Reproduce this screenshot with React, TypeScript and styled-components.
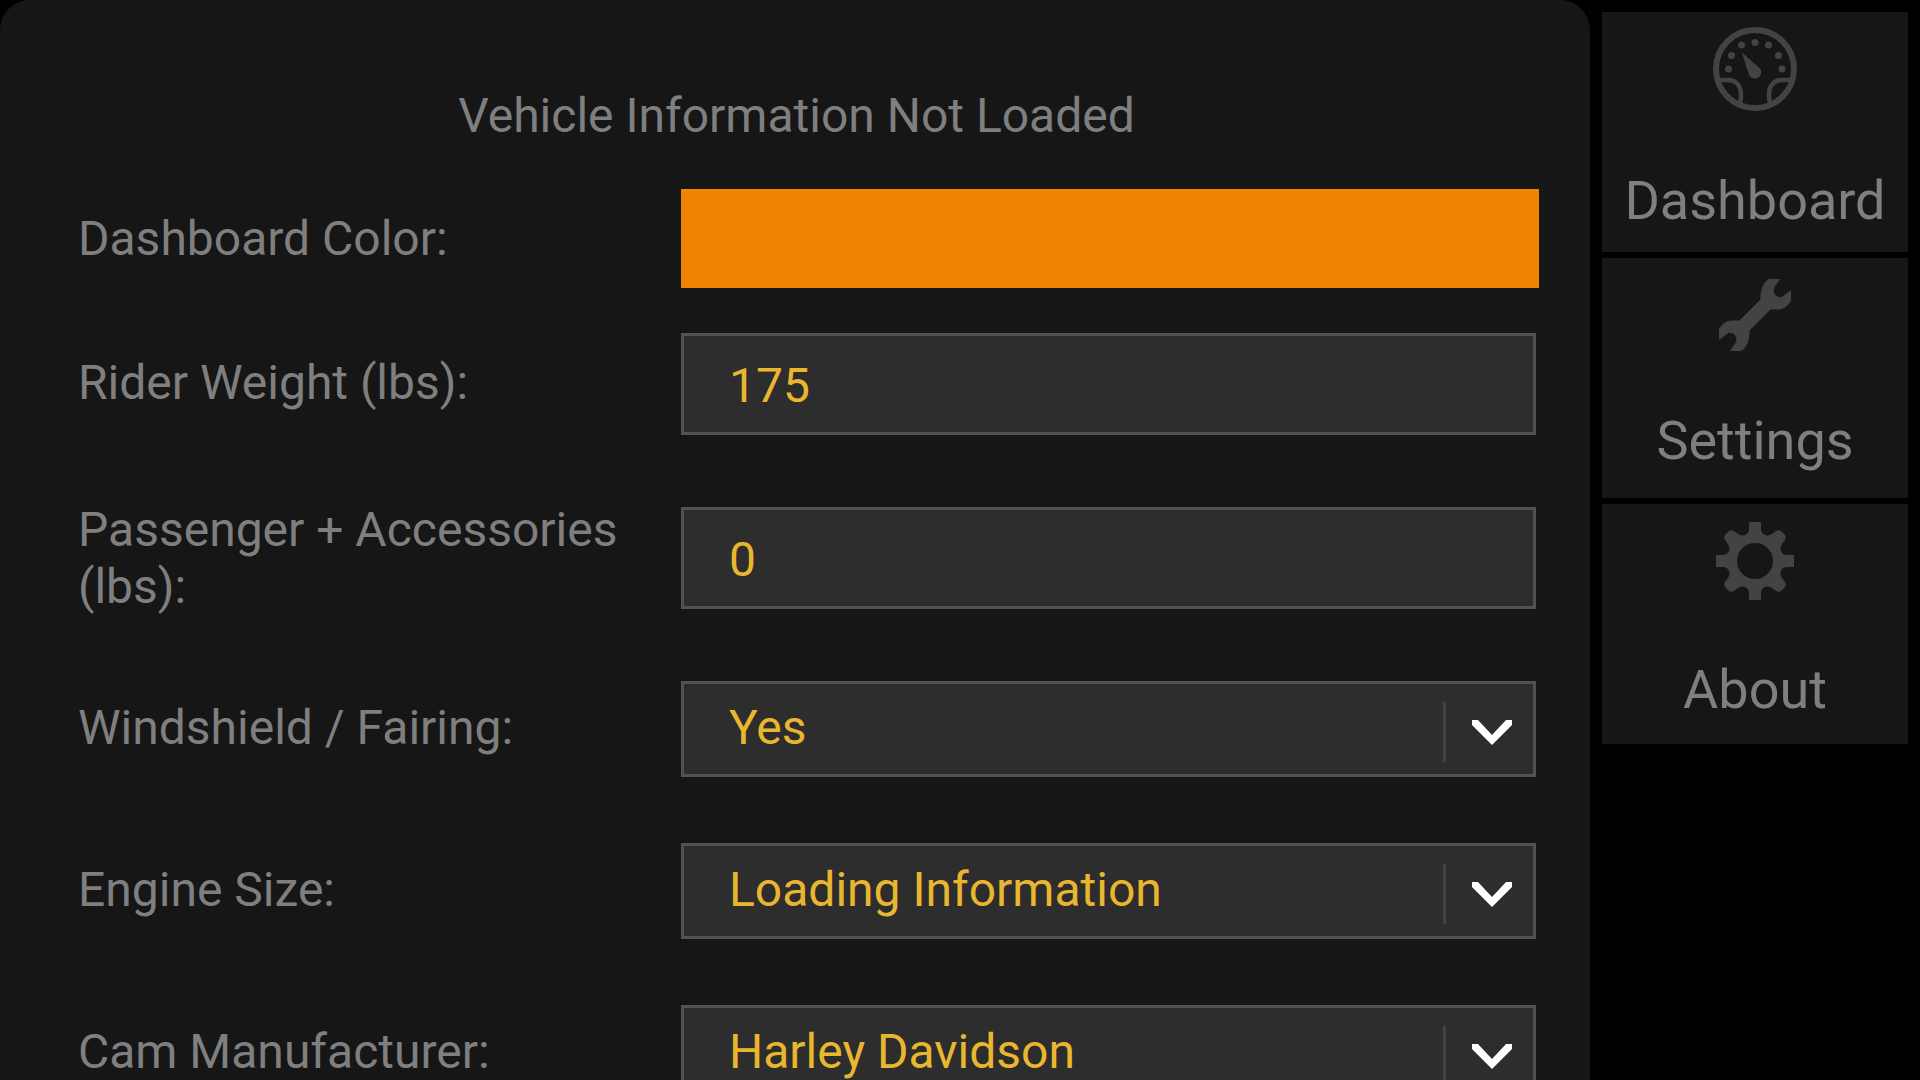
import React, { useState } from "react";
import styled, { createGlobalStyle } from "styled-components";

const color = {
  page: "#000000",
  surface: "#161616",
  field: "#2d2d2d",
  border: "#525252",
  divider: "#434343",
  icon: "#434343",
  text: "#7f7f7f",
  value: "#e9b630",
};

const GlobalStyle = createGlobalStyle`
  *, *::before, *::after { box-sizing: border-box; }
  body {
    margin: 0;
    background: ${color.page};
    color: ${color.text};
    font-family: Roboto, "Liberation Sans", sans-serif;
    font-size: 48px;
    line-height: 57px;
  }
`;

const Shell = styled.div`
  display: flex;
  height: 100vh;
  overflow: hidden;
`;

const Panel = styled.main`
  flex: 1;
  min-width: 0;
  padding: 87px 51px 48px 78px;
  overflow-y: auto;
  scrollbar-width: none;
  background: ${color.surface};
  border-radius: 30px 30px 0 0;
`;

const Title = styled.h1`
  margin: 0 0 45px;
  padding-right: 24px;
  font-size: inherit;
  font-weight: 400;
  text-align: center;
`;

const Row = styled.div<{ $gap?: number }>`
  display: grid;
  grid-template-columns: 603px minmax(0, 1fr);
  align-items: center;
  margin-bottom: ${({ $gap = 66 }) => $gap}px;
`;

const Label = styled.label<{ $raised?: boolean }>`
  padding-right: 48px;
  padding-bottom: ${({ $raised }) => ($raised ? 4 : 0)}px;
`;

const Swatch = styled.button`
  height: 99px;
  padding: 0;
  border: 0;
  background: #ee8400;
  cursor: pointer;
`;

const TextField = styled.input`
  width: calc(100% - 3px);
  height: 102px;
  padding: 3px 45px 0;
  border: 3px solid ${color.border};
  border-radius: 0;
  outline: 0;
  background: ${color.field};
  color: ${color.value};
  font: inherit;
`;

const SelectBox = styled.div`
  display: grid;
  grid-template-columns: minmax(0, 1fr) 93px;
  margin-right: 3px;
`;

const SelectControl = styled.select`
  grid-area: 1 / 1 / 2 / 3;
  height: 96px;
  padding: 0 93px 4px 45px;
  border: 3px solid ${color.border};
  border-radius: 0;
  outline: 0;
  appearance: none;
  background: ${color.field};
  color: ${color.value};
  font: inherit;
`;

const Arrow = styled.span`
  grid-area: 1 / 2 / 2 / 3;
  display: flex;
  align-items: center;
  height: 60px;
  margin-top: 21px;
  padding-left: 26px;
  border-left: 3px solid ${color.divider};
  pointer-events: none;
`;

const Nav = styled.nav`
  display: flex;
  flex: 0 0 330px;
  flex-direction: column;
  gap: 6px;
  padding: 12px;
`;

const NavButton = styled.button<{ $iconSize: number }>`
  display: flex;
  flex-direction: column;
  align-items: center;
  gap: 57px;
  height: 240px;
  padding: ${({ $iconSize }) => 57 - $iconSize / 2}px 0 0;
  border: 0;
  background: ${color.surface};
  color: inherit;
  font: inherit;
  font-size: 54px;
  line-height: 66px;
  cursor: pointer;

  svg {
    flex: none;
    display: block;
  }
`;

function ChevronIcon() {
  return (
    <svg width="40" height="25" viewBox="0 0 40 25" aria-hidden="true">
      <path d="M0 0H6L20 15L34 0H40V5L20 25L0 5Z" fill="#ffffff" />
    </svg>
  );
}

function GaugeIcon() {
  const dots = [
    [15.5, 42],
    [18.5, 28.5],
    [28.5, 18],
    [42, 15.5],
    [55.5, 18],
    [65.5, 28.5],
    [69, 42],
  ];
  return (
    <svg width="84" height="84" viewBox="0 0 84 84" aria-hidden="true">
      <circle cx="42" cy="42" r="39" fill="none" stroke={color.icon} strokeWidth="6" />
      <g fill="none" stroke={color.icon} strokeWidth="4.5">
        <path d="M5 53H15C24 53 28 60 28 67C28 70 28 73 27 76" />
        <path d="M79 53H69C60 53 56 60 56 67C56 70 56 73 57 76" />
      </g>
      <g fill={color.icon}>
        {dots.map(([cx, cy]) => (
          <circle key={cx} cx={cx} cy={cy} r="3.5" />
        ))}
        <path d="M29 25.5C33 29 42 37 47 41.5C50 46 47 51.5 42 51.5C38 51.5 36 49 35.5 46C33 39 31 32 29 25.5Z" />
      </g>
    </svg>
  );
}

function WrenchIcon() {
  const head =
    "M50 0H61L55 9L54.5 13L57 17L62 18.5L72 11V22C69 27 65 30 59 30.5H51L41.500 21C41 14 43 7 46 3.5C47 2 48.5 1 50 0Z";
  return (
    <svg width="72" height="72" viewBox="0 0 72 72" aria-hidden="true">
      <g fill={color.icon}>
        <path d={head} />
        <path d={head} transform="rotate(180 36 36)" />
        <path d="M42.5 19.5L52.5 29.5L29.5 52.5L19.5 42.5Z" />
      </g>
    </svg>
  );
}

function GearIcon() {
  const quarter =
    "M39 39V0H45V8C46 11 47 13 51 13.5C55 13.5 57 11 60 9C62 8 64 8 65.5 9.5L68.500 12.5C70 14 70 16 69 18C67 21 64.5 23 64.5 27C65 31 67 32 70 33H78V39Z";
  return (
    <svg width="78" height="78" viewBox="0 0 78 78" aria-hidden="true">
      {[0, 90, 180, 270].map((angle) => (
        <path key={angle} d={quarter} fill={color.icon} transform={`rotate(${angle} 39 39)`} />
      ))}
      <circle cx="39" cy="39" r="18" fill={color.surface} />
    </svg>
  );
}

interface TextRowProps {
  id: string;
  label: string;
  initial: string;
  raised?: boolean;
}

function TextRow({ id, label, initial, raised }: TextRowProps) {
  const [value, setValue] = useState(initial);
  return (
    <Row>
      <Label htmlFor={id} $raised={raised}>
        {label}
      </Label>
      <TextField id={id} inputMode="numeric" value={value} onChange={(e) => setValue(e.target.value)} />
    </Row>
  );
}

function SelectRow({ id, label, options }: { id: string; label: string; options: string[] }) {
  return (
    <Row>
      <Label htmlFor={id} $raised>
        {label}
      </Label>
      <SelectBox>
        <SelectControl id={id}>
          {options.map((option) => (
            <option key={option}>{option}</option>
          ))}
        </SelectControl>
        <Arrow>
          <ChevronIcon />
        </Arrow>
      </SelectBox>
    </Row>
  );
}

export default function App() {
  return (
    <>
      <GlobalStyle />
      <Shell>
        <Panel>
          <Title>Vehicle Information Not Loaded</Title>
          <Row $gap={45}>
            <Label htmlFor="dashboard-color">Dashboard Color:</Label>
            <Swatch id="dashboard-color" type="button" />
          </Row>
          <TextRow id="rider-weight" label="Rider Weight (lbs):" initial="175" raised />
          <TextRow id="passenger-weight" label="Passenger + Accessories (lbs):" initial="0" />
          <SelectRow id="windshield" label="Windshield / Fairing:" options={["Yes"]} />
          <SelectRow id="engine-size" label="Engine Size:" options={["Loading Information"]} />
          <SelectRow id="cam-manufacturer" label="Cam Manufacturer:" options={["Harley Davidson"]} />
        </Panel>
        <Nav>
          <NavButton type="button" $iconSize={84}>
            <GaugeIcon />
            Dashboard
          </NavButton>
          <NavButton type="button" $iconSize={72}>
            <WrenchIcon />
            Settings
          </NavButton>
          <NavButton type="button" $iconSize={78}>
            <GearIcon />
            About
          </NavButton>
        </Nav>
      </Shell>
    </>
  );
}
